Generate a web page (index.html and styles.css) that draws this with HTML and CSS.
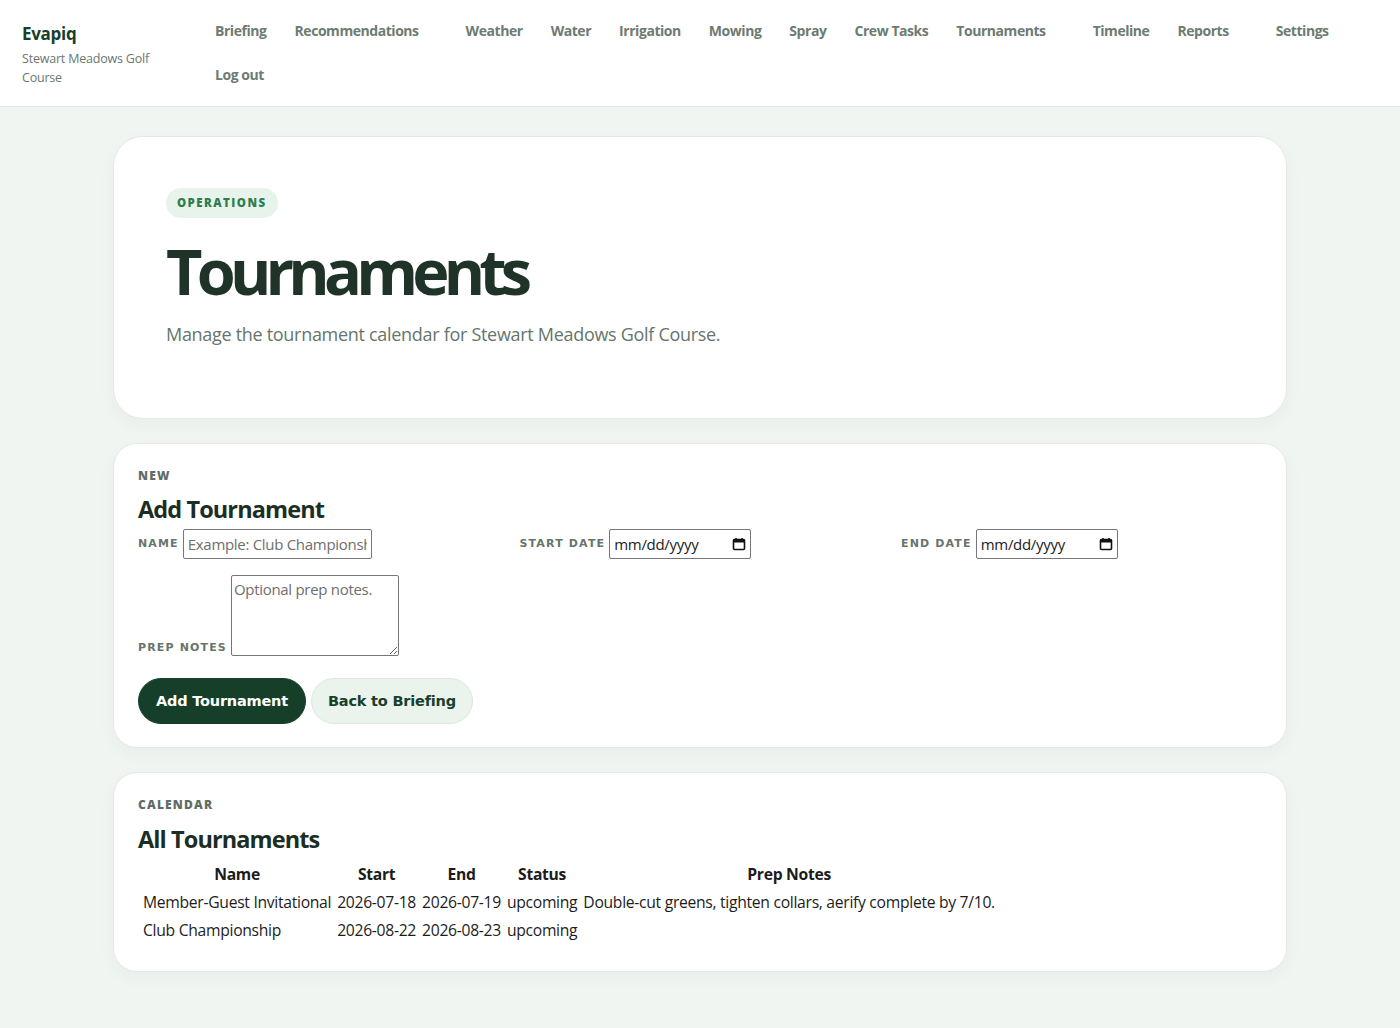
FILE: index.html
```html
<!DOCTYPE html>
<html lang="en">
<head>
<meta charset="utf-8">
<title>Tournaments · Evapiq</title>
<link rel="stylesheet" href="styles.css">
</head>
<body>
<header class="topbar">
  <div class="brand">
    <div class="brand-name">Evapiq</div>
    <div class="brand-sub">Stewart Meadows Golf Course</div>
  </div>
  <nav class="nav">
    <a href="#">Briefing</a>
    <a href="#" class="wide">Recommendations</a>
    <a href="#">Weather</a>
    <a href="#">Water</a>
    <a href="#">Irrigation</a>
    <a href="#">Mowing</a>
    <a href="#">Spray</a>
    <a href="#">Crew Tasks</a>
    <a href="#" class="wide">Tournaments</a>
    <a href="#">Timeline</a>
    <a href="#" class="wide">Reports</a>
    <a href="#">Settings</a>
    <a href="#">Log out</a>
  </nav>
</header>

<main class="page">
  <section class="card hero">
    <span class="pill">Operations</span>
    <h1 class="title">Tournaments</h1>
    <p class="lead">Manage the tournament calendar for Stewart Meadows Golf Course.</p>
  </section>

  <section class="card panel">
    <div class="eyebrow">New</div>
    <h2 class="panel-title">Add Tournament</h2>
    <form class="form">
      <div class="grid">
        <label class="field">NAME <input type="text" class="in-name" placeholder="Example: Club Championship"></label>
        <label class="field">START DATE <span class="date"><span>mm/dd/yyyy</span><svg width="14" height="14" viewBox="0 0 14 14"><rect x="1.5" y="2.5" width="11" height="10" rx="1" fill="none" stroke="#111" stroke-width="1.6"/><rect x="1.5" y="2.5" width="11" height="3" fill="#111"/><path d="M4 1v2M10 1v2" stroke="#111" stroke-width="1.5"/></svg></span></label>
        <label class="field">END DATE <span class="date"><span>mm/dd/yyyy</span><svg width="14" height="14" viewBox="0 0 14 14"><rect x="1.5" y="2.5" width="11" height="10" rx="1" fill="none" stroke="#111" stroke-width="1.6"/><rect x="1.5" y="2.5" width="11" height="3" fill="#111"/><path d="M4 1v2M10 1v2" stroke="#111" stroke-width="1.5"/></svg></span></label>
        <label class="field field-notes">PREP NOTES <textarea class="notes" placeholder="Optional prep notes."></textarea></label>
      </div>
      <div class="actions">
        <button type="button" class="btn btn-primary">Add Tournament</button>
        <button type="button" class="btn btn-ghost">Back to Briefing</button>
      </div>
    </form>
  </section>

  <section class="card panel panel-table">
    <div class="eyebrow">Calendar</div>
    <h2 class="panel-title">All Tournaments</h2>
    <table class="table">
      <thead>
        <tr><th>Name</th><th>Start</th><th>End</th><th>Status</th><th>Prep Notes</th></tr>
      </thead>
      <tbody>
        <tr><td>Member-Guest Invitational</td><td>2026-07-18</td><td>2026-07-19</td><td>upcoming</td><td>Double-cut greens, tighten collars, aerify complete by 7/10.</td></tr>
        <tr><td>Club Championship</td><td>2026-08-22</td><td>2026-08-23</td><td>upcoming</td><td></td></tr>
      </tbody>
    </table>
  </section>
</main>
</body>
</html>
```
FILE: styles.css
```css
* { box-sizing: border-box; }

body {
  margin: 0;
  background: #f0f5f1;
  font-family: "Open Sans", "Noto Sans", sans-serif;
  color: #1d2f25;
}

.topbar {
  display: flex;
  gap: 33px;
  background: #ffffff;
  border-bottom: 1px solid #e1e9e3;
  padding: 21px 22px 20px 22px;
  height: 107px;
}

.brand { width: 160px; flex: none; padding-top: 1px; }
.brand-name {
  font-size: 17px;
  font-weight: 700;
  color: #17402b;
  line-height: 24px;
  letter-spacing: -0.3px;
}
.brand-sub {
  font-size: 12.5px;
  line-height: 19px;
  color: #6a7770;
  margin-top: 3px;
  width: 140px;
  letter-spacing: -0.2px;
}

.nav {
  flex: 1;
  display: flex;
  flex-wrap: wrap;
  column-gap: 28px;
  row-gap: 24px;
  align-content: flex-start;
}
.nav a {
  font-size: 14px;
  font-weight: 700;
  line-height: 20px;
  color: #6d7b73;
  text-decoration: none;
  letter-spacing: -0.45px;
}
.nav a.wide { margin-right: 19px; }

.page {
  width: 1174px;
  margin: 29px auto 0;
  display: flex;
  flex-direction: column;
  gap: 24px;
  padding-bottom: 40px;
}

.card {
  background: #ffffff;
  border: 1px solid #e2eae4;
  box-shadow: 0 6px 18px rgba(30, 60, 40, 0.04);
}

.hero {
  border-radius: 30px;
  padding: 51px 52px 0;
  height: 283px;
}

.pill {
  display: inline-block;
  height: 30px;
  line-height: 30px;
  padding: 0 11px;
  border-radius: 15px;
  background: #e7f3eb;
  color: #2f7d4f;
  font-size: 11.5px;
  font-weight: 800;
  letter-spacing: 1.45px;
  text-transform: uppercase;
}

.title {
  margin: 14px 0 0;
  font-size: 63px;
  line-height: 78px;
  font-weight: 700;
  letter-spacing: -5.8px;
  word-spacing: 0;
  color: #1f3328;
}

.lead {
  margin: 11px 0 0;
  font-size: 18px;
  line-height: 26px;
  color: #66756d;
  letter-spacing: -0.3px;
}

.panel {
  border-radius: 24px;
  padding: 24px 24px 23px;
}

.eyebrow {
  font-size: 12px;
  font-weight: 800;
  letter-spacing: 1.2px;
  text-transform: uppercase;
  color: #5f6d65;
  line-height: 16px;
}

.panel-title {
  margin: 9px 0 0;
  font-size: 23.5px;
  line-height: 32px;
  font-weight: 700;
  letter-spacing: -0.9px;
  color: #1c2e24;
}
.panel-table .panel-title { margin-top: 10px; }
.panel-table { padding-bottom: 26px; }

.grid {
  display: grid;
  grid-template-columns: repeat(3, 363px);
  column-gap: 18.5px;
  row-gap: 16px;
  margin-top: 2px;
}

.field {
  font-family: "DejaVu Sans", Verdana, sans-serif;
  font-size: 11px;
  font-weight: 700;
  letter-spacing: 1.15px;
  color: #66756c;
  display: flex;
  align-items: center;
  gap: 4px;
  line-height: 14px;
  padding-top: 2px;
}
.field-notes { align-items: flex-end; padding-top: 0; }
.field-notes .notes { margin-bottom: -1px; }

.field input,
.field textarea,
.date {
  font-family: "Open Sans", "Noto Sans", sans-serif;
  letter-spacing: -0.3px;
  font-weight: 400;
  color: #222;
  border: 1px solid #767676;
  border-radius: 2px;
  background: #fff;
}

.in-name {
  width: 189px;
  height: 30px;
  font-size: 15px;
  padding: 1px 4px;
}
.in-name::placeholder { color: #6e6e6e; }

.date {
  display: inline-flex;
  align-items: center;
  justify-content: space-between;
  width: 142px;
  height: 30px;
  padding: 0 4px 0 4px;
  font-size: 15px;
}

.notes {
  width: 168px;
  height: 81px;
  font-size: 15px;
  padding: 3px 2px;
  resize: vertical;
}
.notes::placeholder { color: #6e6e6e; }

.actions {
  display: flex;
  gap: 5px;
  margin-top: 23px;
}

.btn {
  height: 46px;
  border-radius: 23px;
  font-family: "DejaVu Sans", Verdana, sans-serif;
  font-size: 14.5px;
  font-weight: 700;
  padding: 0 16px;
  letter-spacing: -0.2px;
  white-space: nowrap;
}
.btn-primary {
  background: #153f29;
  color: #ffffff;
  border: 1px solid #153f29;
  min-width: 168px;
}
.btn-ghost {
  background: #eaf3ec;
  color: #17402b;
  border: 1px solid #dde8e0;
  min-width: 161px;
}

.table {
  margin-top: 4px;
  font-size: 15.7px;
  letter-spacing: -0.3px;
  color: #1c1c1c;
  border-spacing: 2px;
  margin-left: 1px;
}
.table th {
  font-weight: 700;
  padding: 1px 2px;
  line-height: 24px;
}
.table td {
  padding: 1px 2px;
  line-height: 24px;
}
```
